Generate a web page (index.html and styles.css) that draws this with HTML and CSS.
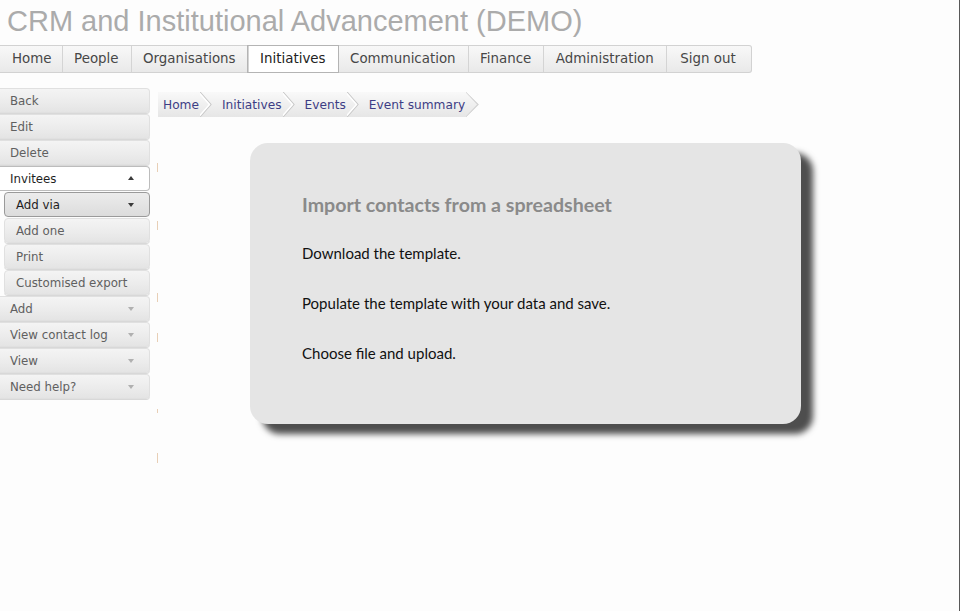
FILE: index.html
```html
<!DOCTYPE html>
<html lang="en">
<head>
<meta charset="utf-8">
<title>CRM and Institutional Advancement (DEMO)</title>
<link rel="stylesheet" href="styles.css">
</head>
<body>
<div class="frame">
  <h1 class="title">CRM and Institutional Advancement (DEMO)</h1>
  <nav class="tabs">
    <a class="tab first">Home</a>
    <a class="tab">People</a>
    <a class="tab">Organisations</a>
    <a class="tab active">Initiatives</a>
    <a class="tab">Communication</a>
    <a class="tab">Finance</a>
    <a class="tab">Administration</a>
    <a class="tab last">Sign out</a>
  </nav>
  <div class="content">
    <aside class="sidebar">
      <div class="btn">Back</div>
      <div class="btn">Edit</div>
      <div class="btn">Delete</div>
      <div class="btn open">Invitees<span class="arrow up"></span></div>
      <div class="btn sub selected">Add via<span class="arrow dark"></span></div>
      <div class="btn sub">Add one</div>
      <div class="btn sub">Print</div>
      <div class="btn sub">Customised export</div>
      <div class="btn">Add<span class="arrow"></span></div>
      <div class="btn">View contact log<span class="arrow"></span></div>
      <div class="btn">View<span class="arrow"></span></div>
      <div class="btn">Need help?<span class="arrow"></span></div>
    </aside>
    <div class="ticks">
      <span class="tick t1"></span>
      <span class="tick t2"></span>
      <span class="tick t3"></span>
      <span class="tick t4"></span>
      <span class="tick t5"></span>
      <span class="tick t6"></span>
    </div>
    <main class="main">
      <div class="crumbs">
        <a class="crumb first">Home</a>
        <svg class="chev" width="12" height="25" viewBox="0 0 12 25"><polyline points="0,0 11,12.5 0,25" fill="none" stroke="#c8c8c8" stroke-width="1.2"/><polyline points="-1.5,0 9.5,12.5 -1.5,25" fill="none" stroke="#ffffff" stroke-width="1.5"/></svg>
        <a class="crumb">Initiatives</a>
        <svg class="chev" width="12" height="25" viewBox="0 0 12 25"><polyline points="0,0 11,12.5 0,25" fill="none" stroke="#c8c8c8" stroke-width="1.2"/><polyline points="-1.5,0 9.5,12.5 -1.5,25" fill="none" stroke="#ffffff" stroke-width="1.5"/></svg>
        <a class="crumb">Events</a>
        <svg class="chev" width="12" height="25" viewBox="0 0 12 25"><polyline points="0,0 11,12.5 0,25" fill="none" stroke="#c8c8c8" stroke-width="1.2"/><polyline points="-1.5,0 9.5,12.5 -1.5,25" fill="none" stroke="#ffffff" stroke-width="1.5"/></svg>
        <a class="crumb">Event summary</a>
        <svg class="chev end" width="13" height="25" viewBox="0 0 13 25"><polyline points="0,0 12,12.5 0,25" fill="none" stroke="#d2d2d2" stroke-width="1.2"/></svg>
      </div>
      <section class="card">
        <h2 class="card-title">Import contacts from a spreadsheet</h2>
        <p class="step">Download the template.</p>
        <p class="step">Populate the template with your data and save.</p>
        <p class="step">Choose file and upload.</p>
      </section>
    </main>
  </div>
</div>
</body>
</html>
```
FILE: styles.css
```css
html, body {
  margin: 0;
  padding: 0;
  background: #fdfdfd;
  overflow: hidden;
}

.frame {
  width: 959px;
  height: 611px;
  border-right: 1px solid #585858;
  display: flex;
  flex-direction: column;
  align-items: flex-start;
}

.title {
  margin: 4px 0 0 0;
  padding-left: 7px;
  font-family: "Liberation Sans", Arial, sans-serif;
  font-weight: normal;
  font-size: 29px;
  line-height: 34px;
  color: #ababab;
  white-space: nowrap;
}

.tabs {
  margin-top: 7px;
  display: flex;
  border: 1px solid #d2d2d2;
  border-left: none;
  border-radius: 0 3px 3px 0;
  background: linear-gradient(#f8f8f8, #e9e9e9);
}

.tab {
  display: block;
  padding: 0 12px 0 11.5px;
  height: 26px;
  line-height: 26px;
  font-family: "DejaVu Sans", Verdana, sans-serif;
  font-size: 13.4px;
  color: #474747;
  border-left: 1px solid #d4d4d4;
  white-space: nowrap;
}

.tab.first {
  border-left: none;
  padding: 0 10px 0 12px;
}

.tab.active {
  background: #fff;
  color: #222;
  outline: 1px solid #b4b4b4;
  position: relative;
  z-index: 1;
}

.tab.last {
  padding: 0 15px 0 13.5px;
  border-radius: 0 3px 3px 0;
}

.content {
  margin-top: 15px;
  display: flex;
  align-items: flex-start;
}

.sidebar {
  width: 150px;
  display: flex;
  flex-direction: column;
  gap: 1px;
}

.btn {
  position: relative;
  box-sizing: border-box;
  height: 25px;
  line-height: 24px;
  padding-left: 10px;
  font-family: "DejaVu Sans", Verdana, sans-serif;
  font-size: 11.8px;
  color: #606060;
  background: linear-gradient(#f4f4f4 0%, #ececec 55%, #e4e4e4 100%);
  border: 1px solid #e0e0e0;
  border-left: none;
  border-radius: 0 4px 4px 0;
  box-shadow: 0 1px 0 #d8d8d8;
  white-space: nowrap;
}

.btn.sub {
  margin-left: 4px;
  padding-left: 11px;
  border-left: 1px solid #e0e0e0;
  border-radius: 4px;
}

.btn.open {
  background: #fff;
  color: #1e1e1e;
  border: 1px solid #bcbcbc;
  border-left: none;
  box-shadow: none;
}

.btn.selected {
  color: #1e1e1e;
  background: linear-gradient(#ececec, #dcdcdc);
  border: 1px solid #9a9a9a;
  box-shadow: none;
}

.arrow {
  position: absolute;
  right: 15px;
  top: 10px;
  width: 0;
  height: 0;
  border-left: 3.5px solid transparent;
  border-right: 3.5px solid transparent;
  border-top: 4px solid #b0b0b0;
}

.arrow.dark {
  border-top-color: #3a3a3a;
}

.arrow.up {
  border-top: none;
  border-bottom: 4px solid #3a3a3a;
  top: 9px;
}

.ticks {
  margin-left: 7px;
  width: 1px;
  display: flex;
  flex-direction: column;
}

.tick {
  display: block;
  width: 1px;
  background: #e8cfb6;
}

.t1 { margin-top: 75px; height: 9px; }
.t2 { margin-top: 49px; height: 9px; }
.t3 { margin-top: 63px; height: 9px; }
.t4 { margin-top: 31px; height: 9px; }
.t5 { margin-top: 67px; height: 4px; }
.t6 { margin-top: 40px; height: 10px; }

.main {
  display: flex;
  flex-direction: column;
  align-items: flex-start;
}

.crumbs {
  margin-top: 4px;
  height: 25px;
  display: flex;
  align-items: center;
  background: linear-gradient(#f9f9f9, #e6e6e6);
  clip-path: polygon(0 0, calc(100% - 13px) 0, 100% 50%, calc(100% - 13px) 100%, 0 100%);
}

.crumb {
  font-family: "DejaVu Sans", Verdana, sans-serif;
  font-size: 12.2px;
  color: #3d3d85;
  white-space: nowrap;
  padding-left: 10px;
  padding-right: 1px;
}

.crumb.first {
  padding-left: 5px;
}

.chev {
  display: block;
  flex: none;
}

.card {
  margin: 26px 0 0 92px;
  box-sizing: border-box;
  width: 551px;
  height: 281px;
  padding: 50px 0 0 52px;
  background: #e5e5e5;
  border-radius: 18px;
  box-shadow: 12px 10px 6px #4e4e4e;
}

.card-title {
  margin: 0 0 26px 0;
  font-family: Lato, "Liberation Sans", sans-serif;
  font-weight: bold;
  font-size: 19.6px;
  line-height: 24px;
  color: #8a8a8a;
}

.step {
  margin: 0 0 30px 0;
  font-family: Lato, "Liberation Sans", sans-serif;
  font-size: 15px;
  line-height: 20px;
  color: #111;
}
```
